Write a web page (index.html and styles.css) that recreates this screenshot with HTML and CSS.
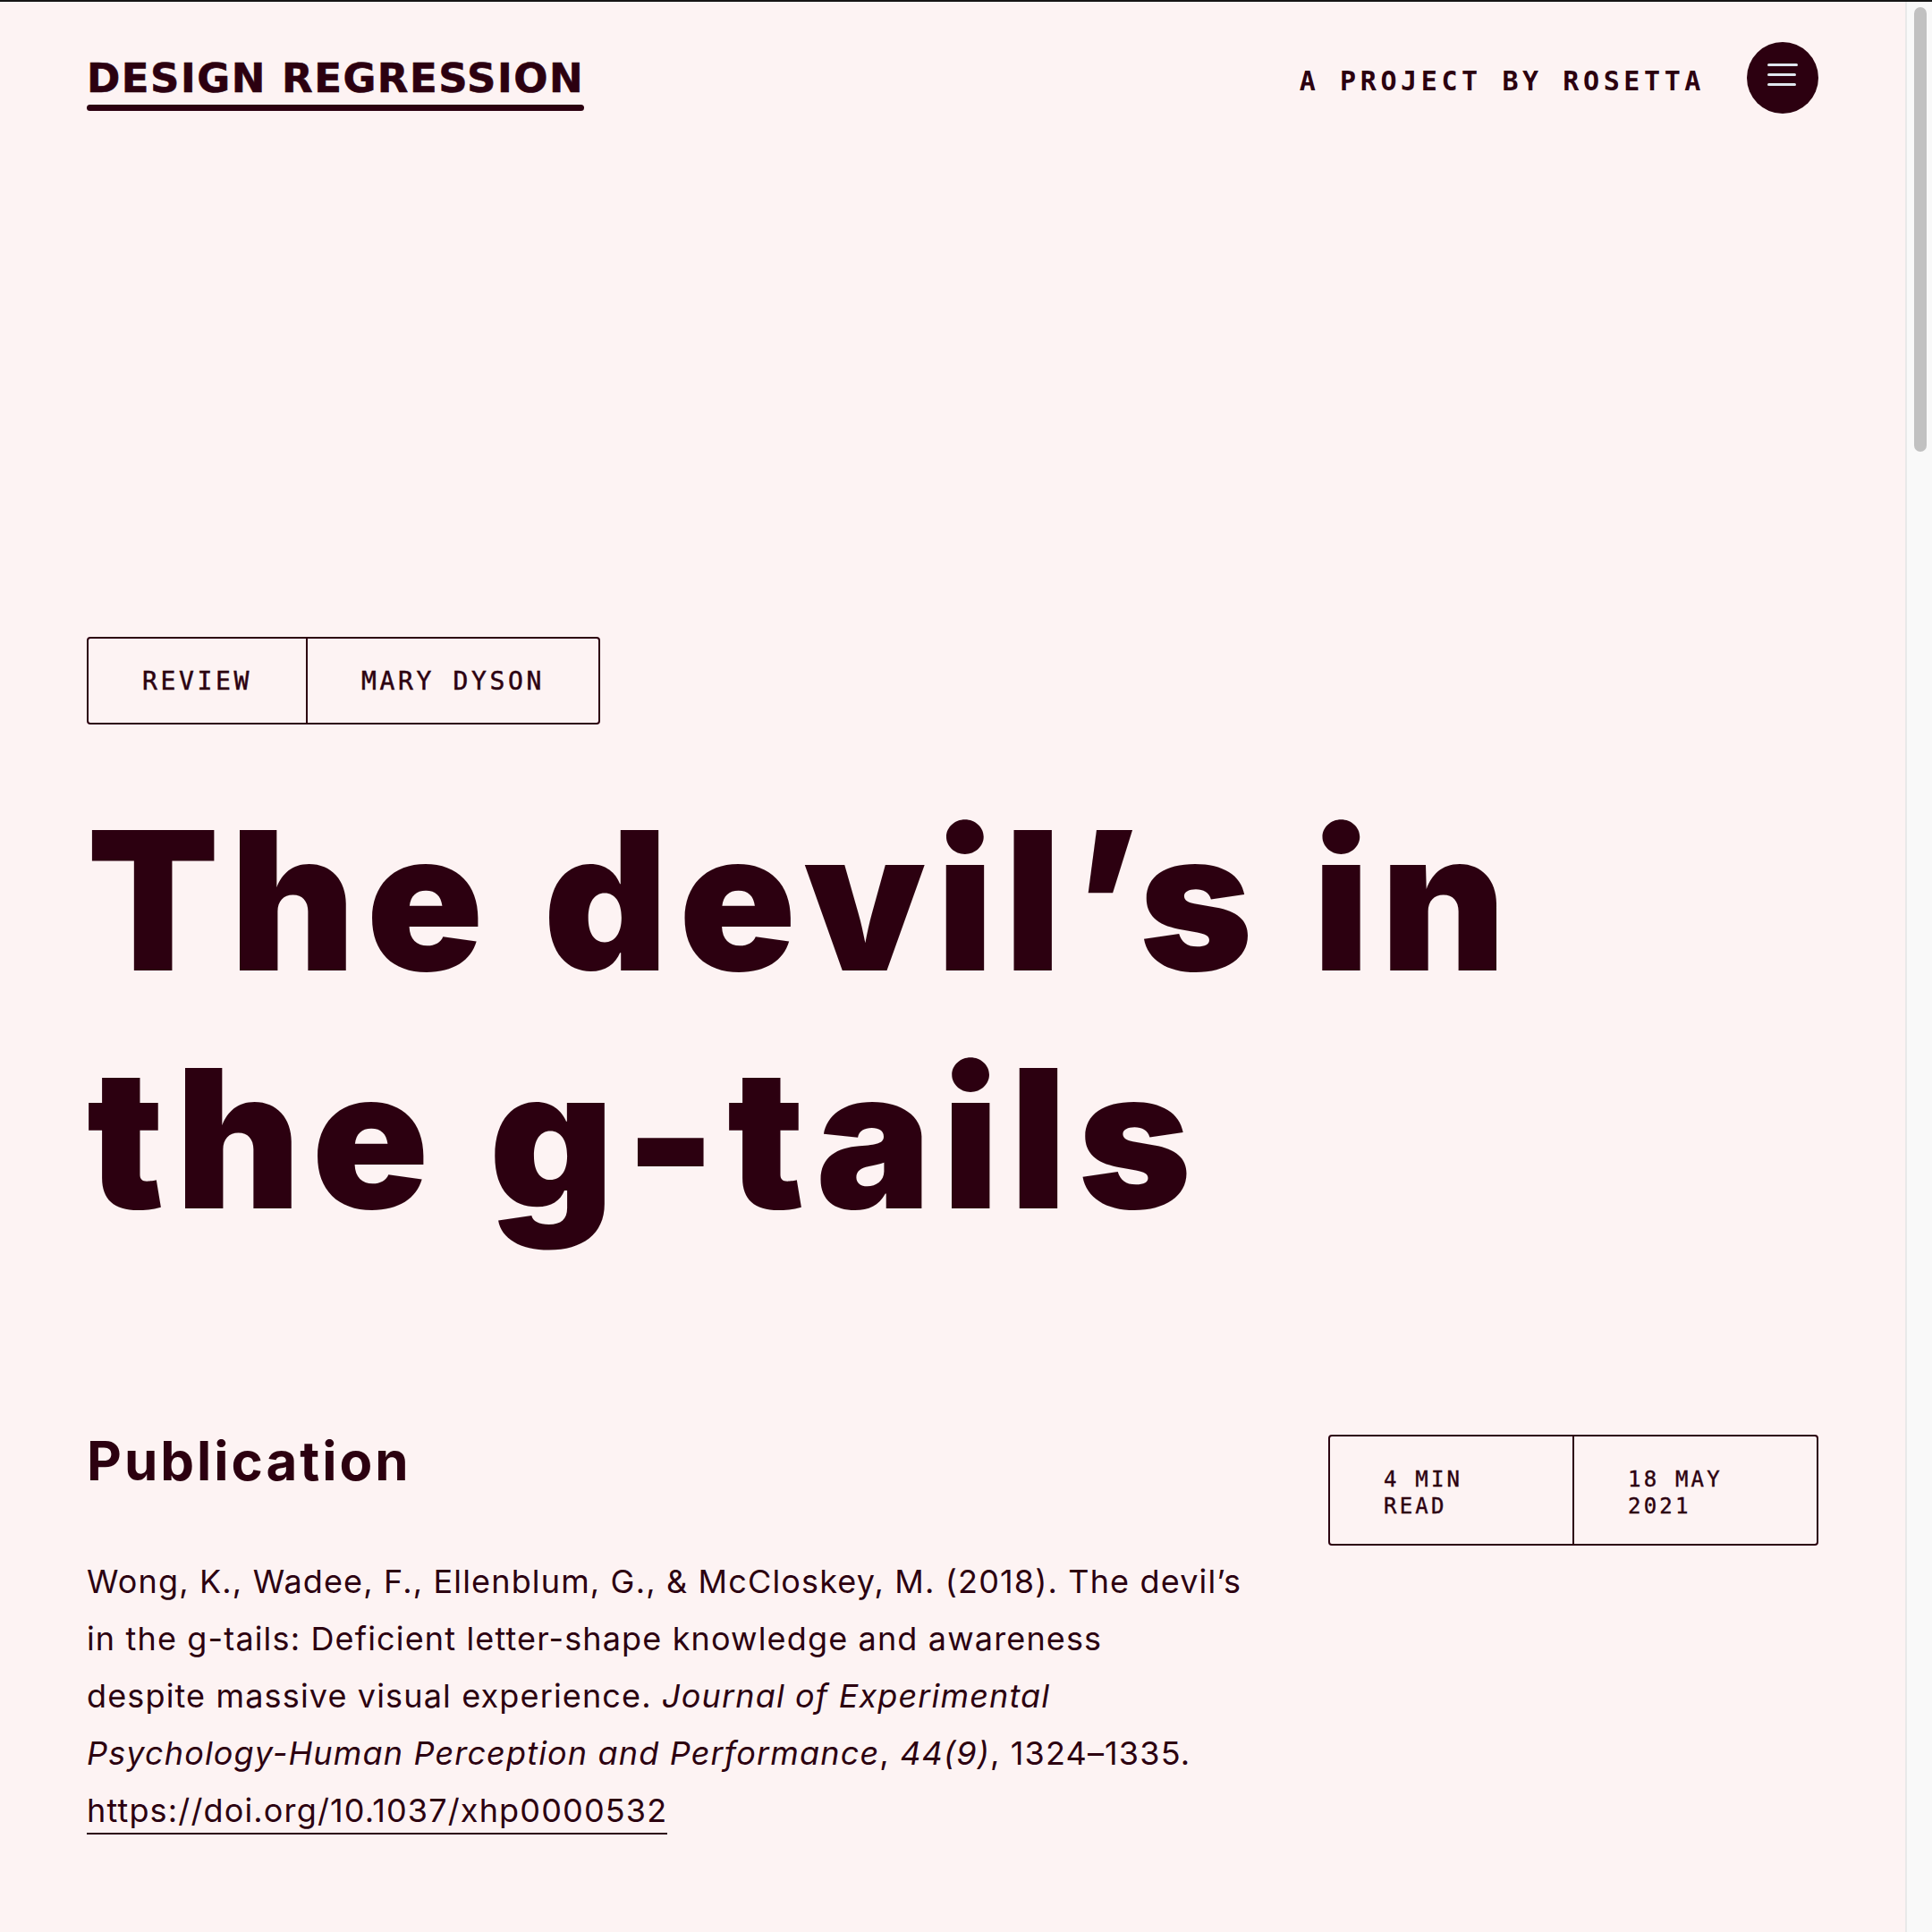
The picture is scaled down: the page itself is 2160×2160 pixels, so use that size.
FILE: index.html
```html
<!DOCTYPE html>
<html lang="en">
<head>
<meta charset="utf-8">
<title>The devil’s in the g-tails — Design Regression</title>
<link rel="stylesheet" href="styles.css">
</head>
<body>
<div class="page">
  <header class="site-header">
    <a class="logo" href="#">DESIGN REGRESSION</a>
    <div class="header-right">
      <span class="byline">A PROJECT BY ROSETTA</span>
      <button class="menu-btn" aria-label="Menu">
        <svg class="menu-icon" width="34" height="26" viewBox="0 0 34 26">
          <line x1="1.5" y1="1.5" x2="32.5" y2="1.5"/>
          <line x1="1.5" y1="12.5" x2="30.5" y2="12.5"/>
          <line x1="1.5" y1="23.5" x2="30.5" y2="23.5"/>
        </svg>
      </button>
    </div>
  </header>

  <main class="article">
    <div class="tags">
      <span class="tag">REVIEW</span>
      <span class="tag">MARY DYSON</span>
    </div>

    <h1 class="title">The devil’s in<br>the g-tails</h1>

    <section class="pub">
      <div class="pub-main">
        <h2 class="pub-heading">Publication</h2>
        <p class="citation">Wong, K., Wadee, F., Ellenblum, G., &amp; McCloskey, M. (2018). The devil’s in the g-tails: Deficient letter-shape knowledge and awareness<br>despite massive visual experience. <em>Journal of Experimental Psychology-Human Perception and Performance</em>, <em>44(9)</em>, 1324–1335. <a class="doi" href="#">https://doi.org/10.1037/xhp0000532</a></p>
      </div>
      <div class="meta">
        <span class="meta-cell">4 MIN READ</span>
        <span class="meta-cell">18 MAY 2021</span>
      </div>
    </section>
  </main>
</div>
<div class="scrollbar" aria-hidden="true"><div class="scrollbar-thumb"></div></div>
</body>
</html>
```

FILE: styles.css
```css
html, body {
  margin: 0;
  padding: 0;
}

body {
  background: #fdf3f3;
  color: #2c0010;
  border-top: 2px solid #151515;
  font-family: "Inter", "Liberation Sans", sans-serif;
}

.page {
  margin-right: 30px;
  padding: 45px 97px 120px 97px;
}

.site-header {
  display: flex;
  justify-content: space-between;
  align-items: flex-start;
}

.logo {
  display: inline-block;
  margin-top: 15px;
  font-family: "DejaVu Sans", sans-serif;
  font-weight: 700;
  font-size: 45px;
  line-height: 52px;
  letter-spacing: 1.5px;
  color: #2c0010;
  text-decoration: none;
  -webkit-text-stroke: 0.6px #2c0010;
}

.logo::after {
  content: "";
  display: block;
  margin-top: 3px;
  height: 7px;
  border-radius: 4px;
  background: #2c0010;
}

.header-right {
  display: flex;
  align-items: center;
  gap: 47px;
  height: 80px;
}

.byline {
  padding-top: 6px;
  font-family: "DejaVu Sans Mono", monospace;
  font-weight: 700;
  font-size: 30px;
  letter-spacing: 4.6px;
}

.menu-btn {
  width: 80px;
  height: 80px;
  border: none;
  border-radius: 50%;
  background: #2c0010;
  padding: 0;
  display: flex;
  align-items: center;
  justify-content: center;
}

.menu-icon {
  margin-top: -6px;
}

.menu-icon line {
  stroke: #dfe7ef;
  stroke-width: 3;
  stroke-linecap: round;
}

.article {
  padding-top: 585px;
}

.tags {
  display: inline-flex;
  border: 2px solid #2c0010;
  border-radius: 4px;
}

.tag {
  padding: 32px 60px 30px;
  font-family: "DejaVu Sans Mono", monospace;
  font-size: 28px;
  line-height: 32px;
  letter-spacing: 3.64px;
  -webkit-text-stroke: 0.5px #2c0010;
}

.tag + .tag {
  border-left: 2px solid #2c0010;
}

.title {
  margin: 64px 0 0;
  font-family: "Inter", sans-serif;
  font-weight: 900;
  font-size: 216px;
  line-height: 266px;
  letter-spacing: 12px;
}

.pub {
  margin-top: 191px;
  display: flex;
  justify-content: space-between;
  align-items: flex-start;
}

.pub-main {
  max-width: 1300px;
}

.pub-heading {
  margin: 0;
  font-weight: 700;
  font-size: 60px;
  line-height: 72px;
  letter-spacing: 3px;
}

.citation {
  margin: 67px 0 0;
  font-size: 36px;
  line-height: 64px;
  letter-spacing: 1.15px;
}

.doi {
  color: inherit;
  text-decoration: none;
  padding-bottom: 3px;
  border-bottom: 2px solid #2c0010;
}

.meta {
  margin-top: 7px;
  width: 548px;
  flex: none;
  display: flex;
  border: 2px solid #2c0010;
  border-radius: 4px;
  box-sizing: border-box;
}

.meta-cell {
  flex: 1 1 0;
  padding: 33px 60px 27px;
  font-family: "DejaVu Sans Mono", monospace;
  font-size: 24px;
  line-height: 30px;
  letter-spacing: 3.2px;
  -webkit-text-stroke: 0.4px #2c0010;
}

.meta-cell + .meta-cell {
  border-left: 2px solid #2c0010;
}

.scrollbar {
  position: fixed;
  top: 2px;
  right: 0;
  bottom: 0;
  width: 28px;
  background: #f9f9f9;
  border-left: 2px solid #e9e9e9;
}

.scrollbar-thumb {
  margin: 6px 6px 0 8px;
  height: 497px;
  border-radius: 8px;
  background: #c1c1c1;
}
```
